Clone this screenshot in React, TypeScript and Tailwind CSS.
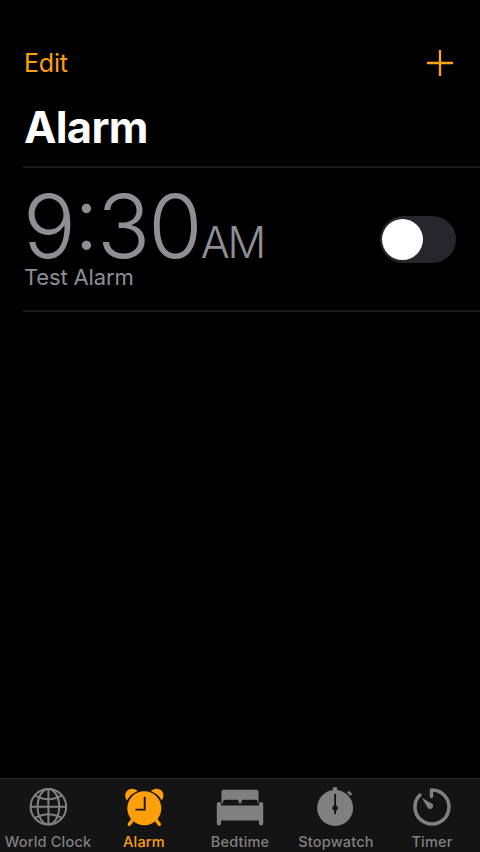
import type { ReactNode } from "react";

const GlobeIcon = () => (
  <svg width="48" height="44" viewBox="0 0 48 44" fill="none" stroke="currentColor" strokeWidth="2">
    <circle cx="24.4" cy="22.7" r="17.8" />
    <ellipse cx="24.4" cy="22.7" rx="10.8" ry="17.8" />
    <path d="M24.4 5v35.500M6.600 22.700h35.600M11 11.300q13.400 7.800 26.800 0M11 34.100q13.400-7.800 26.800 0" />
  </svg>
);

const AlarmIcon = () => (
  <svg width="48" height="44" viewBox="0 0 48 44" fill="currentColor">
    <circle cx="24.3" cy="24.2" r="17" />
    <path d="M6.900 16.400C4.500 13 4.600 8.500 8 6c3.200-2.200 7.500-1.600 9.800 1.100Q10.700 9.900 6.900 16.400ZM41.800 16.400c2.400-3.400 2.300-7.900-1.100-10.400-3.200-2.200-7.500-1.600-9.800 1.100Q38 9.900 41.800 16.400Z" />
    <path d="m12.500 36-3.200 4.300M36.100 36l3.200 4.300" stroke="currentColor" strokeWidth="3.500" strokeLinecap="round" />
    <path d="M24.700 12.800v12.800h-9.200" fill="none" stroke="#141414" strokeWidth="1.900" />
  </svg>
);

const BedIcon = () => (
  <svg width="48" height="44" viewBox="0 0 48 44" fill="currentColor">
    <path d="M5.500 19.300V8q0-2.200 2.200-2.200h32.600Q42.500 5.800 42.500 8v11.300h-.8V18q0-2.200-2.200-2.200H27.400q-2 0-2 2.200v1.300h-2.600V18q0-2.200-2-2.200H9.200q-2.200 0-2.200 2.200v1.300Z" />
    <path d="M5 21.600h38v-1.500a2 2 0 0 1 4.200 0v19.300a2 2 0 0 1-4.200 0v-2.900H5v2.900a2 2 0 0 1-4.200 0V20.100a2 2 0 0 1 4.200 0Z" />
  </svg>
);

const StopwatchIcon = () => (
  <svg width="48" height="44" viewBox="0 0 48 44" fill="currentColor">
    <circle cx="23.100" cy="23.900" r="18" />
    <rect x="20.900" y="3.200" width="4.200" height="4" rx="1" />
    <path d="m36.100 7.700 3.200 3.200" stroke="currentColor" strokeWidth="2.700" />
    <path d="M23.100 10.700v18.500" stroke="#141414" strokeWidth="1.900" strokeLinecap="round" />
    <circle cx="23.100" cy="23.900" r="2.700" fill="#141414" />
  </svg>
);

const TimerIcon = () => (
  <svg width="48" height="44" viewBox="0 0 48 44" fill="none">
    <path d="M23.500 12.500V6a17 17 0 1 1-11.600 5" stroke="currentColor" strokeWidth="3.500" strokeLinecap="round" strokeLinejoin="round" />
    <path d="m13.700 13.800 10.400 5.900a3 3 0 1 1-4.200 4.300Z" fill="currentColor" />
  </svg>
);

const tabs: { label: string; icon: ReactNode; active?: boolean }[] = [
  { label: "World Clock", icon: <GlobeIcon /> },
  { label: "Alarm", icon: <AlarmIcon />, active: true },
  { label: "Bedtime", icon: <BedIcon /> },
  { label: "Stopwatch", icon: <StopwatchIcon /> },
  { label: "Timer", icon: <TimerIcon /> },
];

export default function App() {
  return (
    <div className="flex h-[852px] w-[480px] flex-col overflow-hidden bg-black font-['Inter',sans-serif]">
      <header className="flex h-[100px] items-center justify-between pt-[26px] pr-[26px] pl-6">
        <button className="text-[25px] leading-8 tracking-[-0.2px] text-[#ff9f0a]">Edit</button>
        <button aria-label="Add alarm">
          <svg width="28" height="28" viewBox="0 0 28 28" stroke="#ffa31a" strokeWidth="2.300">
            <path d="M14 1v26M1 14h26" />
          </svg>
        </button>
      </header>
      <h1 className="h-[66px] pl-6 text-[43.500px] leading-[54px] font-bold tracking-[-0.700px] text-white">Alarm</h1>
      <main className="flex-1 pl-[23px]">
        <section className="flex h-[146px] items-center justify-between border-y-2 border-[#191919] pr-6">
          <div className="text-[#8e8e93]">
            <div className="flex h-[78px] items-baseline whitespace-nowrap">
              <span className="text-[88px] leading-[78px] font-light">9</span>
              <span className="flex w-[21px] -translate-y-[9px] justify-center text-[88px] leading-[78px] font-light">:</span>
              <span className="text-[88px] leading-[78px] font-light tracking-[-2px]">30</span>
              <span className="text-[43px] leading-[44px] font-light tracking-[-2px]">AM</span>
            </div>
            <div className="-mt-[2px] pl-px text-[22px] leading-7 tracking-[-0.150px]">Test Alarm</div>
          </div>
          <button role="switch" aria-checked="false" aria-label="Test Alarm" className="flex h-[47px] w-[76px] items-center rounded-full bg-[#27272b] pl-[2px]">
            <span className="size-[41px] rounded-full bg-white" />
          </button>
        </section>
      </main>
      <nav className="grid h-[74px] grid-cols-5 border-t border-[#292929] bg-[#141414]">
        {tabs.map(({ label, icon, active }) => (
          <button key={label} className={`flex flex-col items-center justify-start pt-[5px] ${active ? "text-[#ff9f0a]" : "text-[#808080]"}`}>
            {icon}
            <span className="mt-[5px] text-[14.500px] leading-[18px] font-medium tracking-[0.200px] whitespace-nowrap">{label}</span>
          </button>
        ))}
      </nav>
    </div>
  );
}
